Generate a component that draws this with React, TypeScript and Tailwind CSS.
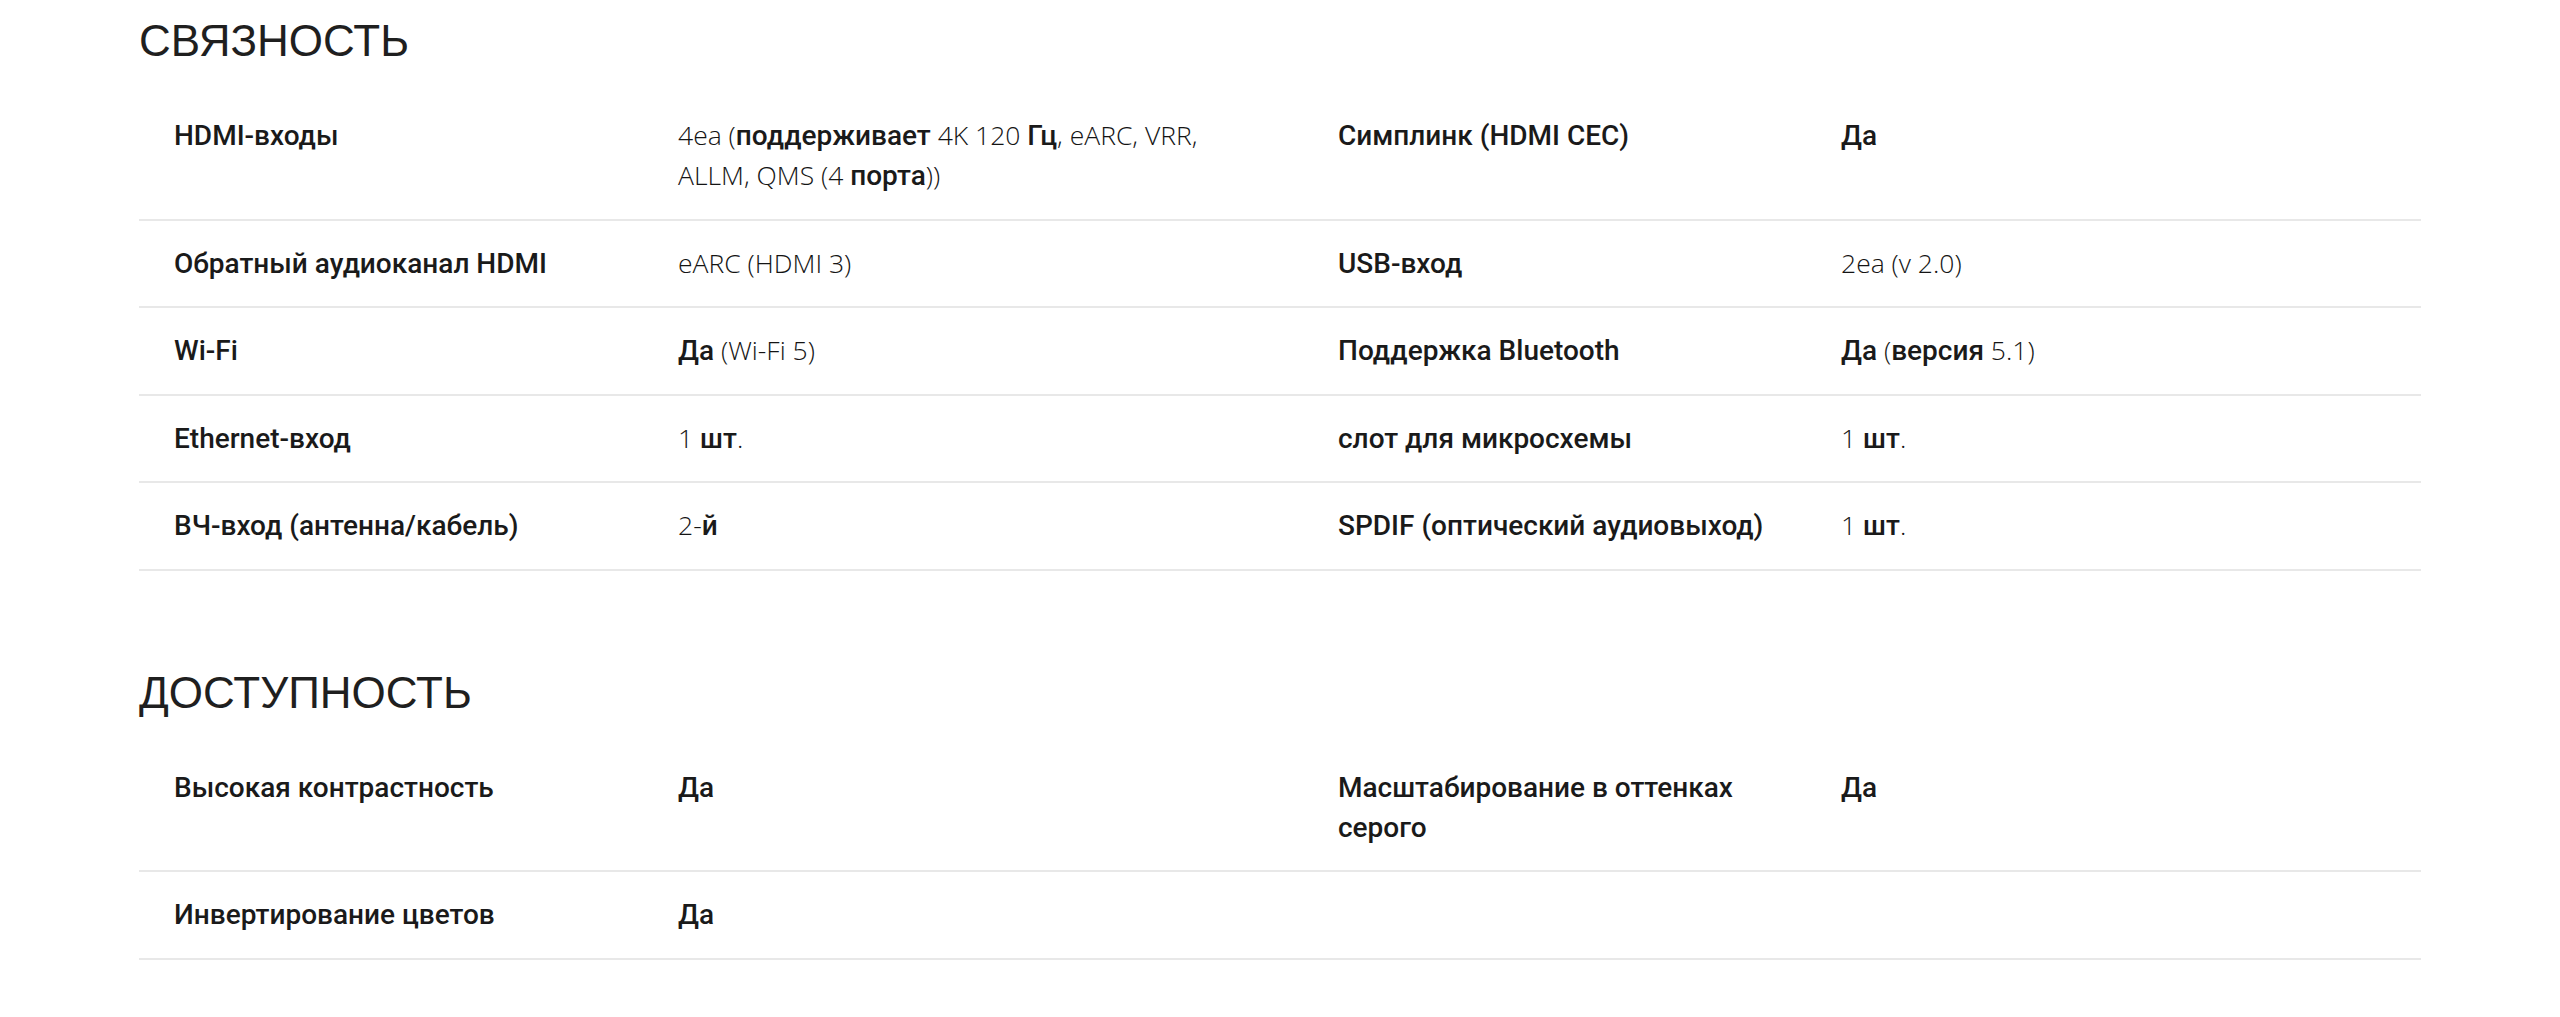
type Pair = { label: string; value: string }
type Row = [Pair, Pair?]

const CONNECTIVITY: Row[] = [
  [
    { label: 'HDMI-входы', value: '4ea (поддерживает 4K 120 Гц, eARC, VRR, ALLM, QMS (4 порта))' },
    { label: 'Симплинк (HDMI CEC)', value: 'Да' },
  ],
  [
    { label: 'Обратный аудиоканал HDMI', value: 'eARC (HDMI 3)' },
    { label: 'USB-вход', value: '2ea (v 2.0)' },
  ],
  [
    { label: 'Wi-Fi', value: 'Да (Wi-Fi 5)' },
    { label: 'Поддержка Bluetooth', value: 'Да (версия 5.1)' },
  ],
  [
    { label: 'Ethernet-вход', value: '1 шт.' },
    { label: 'слот для микросхемы', value: '1 шт.' },
  ],
  [
    { label: 'ВЧ-вход (антенна/кабель)', value: '2-й' },
    { label: 'SPDIF (оптический аудиовыход)', value: '1 шт.' },
  ],
]

const ACCESSIBILITY: Row[] = [
  [
    { label: 'Высокая контрастность', value: 'Да' },
    { label: 'Масштабирование в оттенках серого', value: 'Да' },
  ],
  [{ label: 'Инвертирование цветов', value: 'Да' }],
]

// latin/digits come out in the light face, cyrillic falls back to the heavier one
function Value({ text }: { text: string }) {
  const parts = text.split(/([А-Яа-яЁё]+)/)
  return (
    <>
      {parts.map((p, i) =>
        /[А-Яа-яЁё]/.test(p) ? (
          <span key={i} className="font-['Roboto',sans-serif] font-medium text-[28px] leading-none text-[#1a1a1a]">
            {p}
          </span>
        ) : (
          <span key={i} className="font-['Open_Sans',sans-serif] font-light text-[26.5px] leading-none text-[#141414]">
            {p}
          </span>
        )
      )}
    </>
  )
}

function Cells({ pair }: { pair?: Pair }) {
  if (!pair) return <><div /><div /></>
  return (
    <>
      <div className="pr-[60px] font-['Roboto',sans-serif] font-medium text-[28px] text-[#1a1a1a]">
        {pair.label}
      </div>
      <div className="pr-[100px]">
        <Value text={pair.value} />
      </div>
    </>
  )
}

function Section({ title, rows, className }: { title: string; rows: Row[]; className?: string }) {
  return (
    <section className={className}>
      <h2 className="font-['Liberation_Sans',Arial,sans-serif] text-[44px] leading-[50px] text-[#1f1f1f] mb-[27px]">
        {title}
      </h2>
      <div>
        {rows.map((row, i) => (
          <div
            key={i}
            className="grid grid-cols-[504px_660px_503px_1fr] pl-[35px] pt-[23px] pb-[22.5px] font-['Roboto',sans-serif] text-[28px] leading-[40px] border-b-2 border-[#e8e8e8]"
          >
            <Cells pair={row[0]} />
            <Cells pair={row[1]} />
          </div>
        ))}
      </div>
    </section>
  )
}

export default function App() {
  return (
    <div className="min-h-screen bg-white px-[139px] pt-[16px]">
      <Section title="СВЯЗНОСТЬ" rows={CONNECTIVITY} />
      <Section title="ДОСТУПНОСТЬ" rows={ACCESSIBILITY} className="mt-[97px]" />
    </div>
  )
}
